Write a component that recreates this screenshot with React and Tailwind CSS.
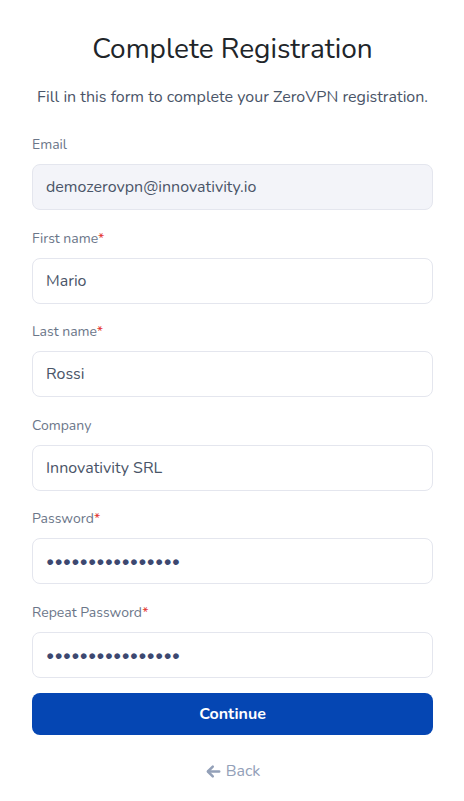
import React, { useState } from 'react'

const font = { fontFamily: '"Nunito", Lato, "Open Sans", sans-serif' }

function Field({ label, required, value, type = 'text', disabled }) {
  return (
    <div className="flex flex-col">
      <label className="text-[14px] leading-5 text-[#6b7689] mb-[9px]">
        {label}
        {required && <span className="text-[#e3342f]">*</span>}
      </label>
      <input
        type={type}
        defaultValue={value}
        disabled={disabled}
        className={`h-[46px] w-full px-[13px] rounded-lg border border-[#e4e6ee] text-[16px] outline-none ${
          disabled ? 'bg-[#f3f4f9]' : 'bg-white'
        } ${type === 'password' ? 'text-[#3d4870]' : 'text-[#4a5568]'}`}
        style={font}
      />
    </div>
  )
}

export default function App() {
  const [pwd] = useState('aaaaaaaaaaaaaaaa')
  return (
    <div className="min-h-[801px] w-full bg-white pl-8 pr-[31px] pt-[31px]" style={font}>
      <h1 className="text-center text-[28px] leading-9 text-[#212529]">Complete Registration</h1>
      <p className="mt-[18px] text-center text-[16px] leading-6 text-[#4a5568]">
        Fill in this form to complete your ZeroVPN registration.
      </p>

      <form className="mt-[26px] flex flex-col gap-[18.5px]" onSubmit={e => e.preventDefault()}>
        <Field label="Email" value="demozerovpn@innovativity.io" disabled />
        <Field label="First name" required value="Mario" />
        <Field label="Last name" required value="Rossi" />
        <Field label="Company" value="Innovativity SRL" />
        <Field label="Password" required type="password" value={pwd} />
        <Field label="Repeat Password" required type="password" value={pwd} />
        <button
          type="submit"
          className="-mt-[3px] h-[42px] w-full rounded-lg bg-[#0546b3] text-[16px] font-bold text-white"
        >
          Continue
        </button>
      </form>

      <div className="mt-[24px] flex justify-center">
        <button className="flex items-center gap-1 text-[16px] text-[#93a0b8]">
          <svg width="17" height="17" viewBox="0 0 24 24" fill="none" stroke="currentColor" strokeWidth="3.5" strokeLinecap="round" strokeLinejoin="round">
            <path d="M20 12H5" />
            <path d="M11 5l-7 7 7 7" />
          </svg>
          <span>Back</span>
        </button>
      </div>
    </div>
  )
}
